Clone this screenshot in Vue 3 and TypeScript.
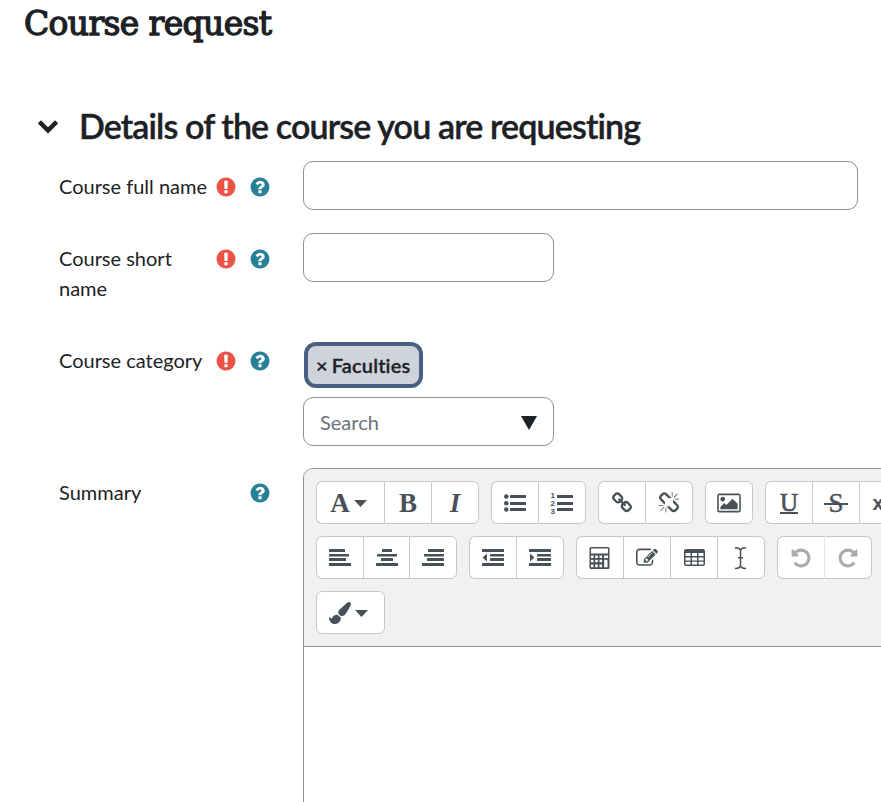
<script setup lang="ts">
interface Tool { icon: string; w: number; caret?: boolean; off?: boolean }

const ink: Record<string, string> = {
  link: 'M1520 1216q0-40-28-68l-208-208q-28-28-68-28-42 0-72 32 3 3 19 18.5t21.5 21.5 15 19 13 25.5 3.5 27.5q0 40-28 68t-68 28q-15 0-27.5-3.5t-25.5-13-19-15-21.5-21.5-18.5-19q-33 31-33 73 0 40 28 68l206 207q27 27 68 27 40 0 68-26l147-146q28-28 28-67zm-703-705q0-40-28-68l-206-207q-28-28-68-28-39 0-68 27l-147 146q-28 28-28 67 0 40 28 68l208 208q27 27 68 27 42 0 72-31-3-3-19-18.5t-21.5-21.5-15-19-13-25.5-3.5-27.5q0-40 28-68t68-28q15 0 27.5 3.5t25.5 13 19 15 21.5 21.5 18.5 19q33-31 33-73zm895 705q0 120-85 203l-147 146q-83 83-203 83-121 0-204-85l-206-207q-83-83-83-203 0-123 88-209l-88-88q-86 88-208 88-120 0-204-84l-208-208q-84-84-84-204t85-203l147-146q83-83 203-83 121 0 204 85l206 207q83 83 83 203 0 123-88 209l88 88q86-88 208-88 120 0 204 84l208 208q84 84 84 204z',
  unlink: 'M503 1271l-256 256q-10 9-23 9-12 0-23-9-9-10-9-23t9-23l256-256q10-9 23-9t23 9q9 10 9 23t-9 23zm169 41v320q0 14-9 23t-23 9-23-9-9-23v-320q0-14 9-23t23-9 23 9 9 23zm-224-224q0 14-9 23t-23 9h-320q-14 0-23-9t-9-23 9-23 23-9h320q14 0 23 9t9 23zm1264 128q0 120-85 203l-147 146q-83 83-203 83-121 0-204-85l-334-335q-21-21-42-56l239-18 273 274q28 28 68 27.5t68-27.5l147-146q28-28 28-67 0-40-28-68l-274-275 18-239q35 21 56 42l336 336q84 86 84 204zm-617-724l-239 18-273-274q-28-28-68-28-39 0-68 27l-147 146q-28 28-28 67 0 40 28 68l274 274-18 240q-35-21-56-42l-336-336q-84-86-84-204 0-120 85-203l147-146q83-83 203-83 121 0 204 85l334 335q21 21 42 56zm633 84q0 14-9 23t-23 9h-320q-14 0-23-9t-9-23 9-23 23-9h320q14 0 23 9t9 23zm-544-544v320q0 14-9 23t-23 9-23-9-9-23v-320q0-14 9-23t23-9 23 9 9 23zm407 151l-256 256q-11 9-23 9t-23-9q-9-10-9-23t9-23l256-256q10-9 23-9t23 9q9 10 9 23t-9 23z',
  image: 'M576 576q0 80-56 136t-136 56-136-56-56-136 56-136 136-56 136 56 56 136zm1024 384v448h-1408v-192l320-320 160 160 512-512zm96-704h-1600q-13 0-22.5 9.5t-9.5 22.5v1216q0 13 9.5 22.5t22.5 9.5h1600q13 0 22.5-9.5t9.5-22.5v-1216q0-13-9.5-22.5t-22.5-9.5zm160 32v1216q0 66-47 113t-113 47h-1600q-66 0-113-47t-47-113v-1216q0-66 47-113t113-47h1600q66 0 113 47t47 113z',
  edit: 'M888 1184l116-116-152-152-116 116v56h96v96h56zm440-720q-16-16-33 1l-350 350q-17 17-1 33t33-1l350-350q17-17 1-33zm80 594v190q0 119-84.5 203.5t-203.5 84.5h-832q-119 0-203.5-84.5t-84.5-203.5v-832q0-119 84.5-203.5t203.5-84.5h832q63 0 117 25 15 7 18 23 3 17-9 29l-49 49q-14 14-32 8-23-6-45-6h-832q-66 0-113 47t-47 113v832q0 66 47 113t113 47h832q66 0 113-47t47-113v-126q0-13 9-22l64-64q15-15 35-7t20 29zm-96-738l288 288-672 672h-288v-288zm444 132l-92 92-288-288 92-92q28-28 68-28t68 28l152 152q28 28 28 68t-28 68z',
  brush: 'M1615 0q70 0 122.5 46.5t52.5 116.5q0 63-45 151-332 629-465 752-97 91-218 91-126 0-216.5-92.5t-90.5-219.5q0-128 92-212l638-579q59-54 130-54zm-909 1034q39 76 106.5 130t150.5 76l1 71q4 213-129.5 347t-348.5 134q-123 0-218-46.5t-152.5-127.5-86.5-183-29-220q7 5 41 30t62 44.5 59 36.5 46 17q41 0 55-37 25-66 57.5-112.5t69.5-76 88-47.5 103-25.5 125-10.5z',
  undo: 'M1664 896q0 156-61 298t-164 245-245 164-298 61q-172 0-327-72.5t-264-204.5q-7-10-6.5-22.5t8.5-20.5l137-138q10-9 25-9 16 2 23 12 73 95 179 147t225 52q104 0 198.5-40.5t163.5-109.5 109.5-163.5 40.5-198.5-40.5-198.5-109.5-163.5-163.5-109.5-198.5-40.5q-98 0-188 35.5t-160 101.5l137 138q31 30 14 69-17 40-59 40h-448q-26 0-45-19t-19-45v-448q0-42 40-59 39-17 69 14l130 129q107-101 244.5-156.5t284.5-55.5q156 0 298 61t245 164 164 245 61 298z',
}
ink.redo = ink.undo

/* Line-based icons on a 22px grid: [x, y, width, height] */
const bars: Record<string, number[][]> = {
  left: [[0, 2, 16, 3], [0, 7, 20, 2.5], [0, 11, 17, 3], [0, 16, 22, 3]],
  center: [[6, 2, 10, 3], [1, 7, 20, 2.5], [5, 11, 12, 3], [0, 16, 22, 3]],
  right: [[6, 2, 16, 3], [2, 7, 20, 2.5], [5, 11, 17, 3], [0, 16, 22, 3]],
  outdent: [[0, 2, 22, 3], [8, 7, 14, 2.5], [8, 11, 14, 3], [0, 16, 22, 3]],
  indent: [[0, 2, 22, 3], [8, 7, 14, 2.5], [8, 11, 14, 3], [0, 16, 22, 3]],
  ul: [[6, 3, 16, 3], [6, 10, 16, 3], [6, 16, 16, 3]],
  ol: [[6, 3, 16, 3], [6, 10, 16, 3], [6, 16, 16, 3]],
}

const letters: Record<string, string> = { A: 'A', B: 'B', I: 'I', U: 'U', S: 'S', x: 'x' }

const rows: Tool[][][] = [
  [
    [{ icon: 'A', w: 68, caret: true }, { icon: 'B', w: 47 }, { icon: 'I', w: 48 }],
    [{ icon: 'ul', w: 47 }, { icon: 'ol', w: 48 }],
    [{ icon: 'link', w: 47 }, { icon: 'unlink', w: 48 }],
    [{ icon: 'image', w: 48 }],
    [{ icon: 'U', w: 47 }, { icon: 'S', w: 47 }, { icon: 'x', w: 48 }],
  ],
  [
    [{ icon: 'left', w: 47 }, { icon: 'center', w: 46 }, { icon: 'right', w: 48 }],
    [{ icon: 'outdent', w: 47 }, { icon: 'indent', w: 48 }],
    [{ icon: 'calc', w: 47 }, { icon: 'edit', w: 47 }, { icon: 'table', w: 47 }, { icon: 'cursor', w: 48 }],
    [{ icon: 'undo', w: 47, off: true }, { icon: 'redo', w: 48, off: true }],
  ],
  [[{ icon: 'brush', w: 69, caret: true }]],
]

const fields = [
  { id: 'full', label: 'Course full name', required: true },
  { id: 'short', label: 'Course short name', required: true },
  { id: 'category', label: 'Course category', required: true },
  { id: 'summary', label: 'Summary', required: false },
]
</script>

<template>
  <main class="page">
    <h1>Course request</h1>
    <header class="section">
      <svg class="chevron" viewBox="0 0 1792 1792"><path d="M1683 808l-742 741q-19 19-45 19t-45-19l-742-741q-19-19-19-45.5t19-45.5l166-165q19-19 45-19t45 19l531 531 531-531q19-19 45-19t45 19l166 165q19 19 19 45.5t-19 45.5z" /></svg>
      <h3>Details of the course you are requesting</h3>
    </header>

    <div v-for="f in fields" :key="f.id" class="row" :class="f.id">
      <div class="label">
        <label>{{ f.label }}</label>
        <span class="marks">
          <svg v-if="f.required" class="req" viewBox="0 0 1792 1792"><path d="M896 128q209 0 385.5 103t279.5 279.5 103 385.5-103 385.5-279.5 279.5-385.5 103-385.5-103-279.5-279.5-103-385.5 103-385.5 279.5-279.5 385.5-103zm128 1247v-190q0-14-9-23.5t-22-9.5h-192q-13 0-23 10t-10 23v190q0 13 10 23t23 10h192q13 0 22-9.5t9-23.5zm-2-344l18-621q0-12-10-18-10-8-24-8h-220q-14 0-24 8-10 6-10 18l17 621q0 10 10 17.5t24 7.5h185q14 0 23.5-7.5t10.5-17.5z" /></svg>
          <svg class="help" viewBox="0 0 1792 1792"><path d="M1024 1376v-192q0-14-9-23t-23-9h-192q-14 0-23 9t-9 23v192q0 14 9 23t23 9h192q14 0 23-9t9-23zm256-672q0-88-55.5-163t-138.5-116-170-41q-243 0-371 213-15 24 8 42l132 100q7 6 19 6 16 0 25-12 53-68 86-92 34-24 86-24 48 0 85.5 26t37.5 59q0 38-20 61t-68 45q-63 28-115.5 86.5t-52.5 125.5v36q0 14 9 23t23 9h192q14 0 23-9t9-23q0-19 21.5-49.5t54.5-49.5q32-18 49-28.5t46-35 44.5-48 28-60.5 12.5-81zm384 192q0 209-103 385.5t-279.5 279.5-385.5 103-385.5-103-279.5-279.5-103-385.5 103-385.5 279.5-279.5 385.5-103 385.5 103 279.5 279.5 103 385.5z" /></svg>
        </span>
      </div>

      <input v-if="f.id === 'full'" class="box wide" type="text" />
      <input v-else-if="f.id === 'short'" class="box" type="text" />
      <div v-else-if="f.id === 'category'" class="picker">
        <span class="tag"><span class="times">×</span> Faculties</span>
        <div class="box search">
          <span>Search</span>
          <svg viewBox="0 0 16 14"><path d="M0 0h16L8 14z" /></svg>
        </div>
      </div>
      <div v-else class="editor">
        <div class="toolbar">
          <div v-for="(groups, r) in rows" :key="r" class="tools">
            <div v-for="(group, g) in groups" :key="g" class="group">
              <button v-for="t in group" :key="t.icon" type="button" :class="{ off: t.off, menu: t.caret }" :style="{ width: t.w + 'px' }">
                <span v-if="letters[t.icon]" class="letter" :class="'l-' + t.icon">{{ letters[t.icon] }}</span>
                <svg v-else-if="ink[t.icon]" class="icon" :class="t.icon" viewBox="0 0 1792 1792"><path :d="ink[t.icon]" /></svg>
                <svg v-else class="icon" :class="t.icon" viewBox="0 0 22 22">
                  <rect v-for="(b, i) in bars[t.icon] || []" :key="i" :x="b[0]" :y="b[1]" :width="b[2]" :height="b[3]" rx=".5" />
                  <path v-if="t.icon === 'outdent'" d="M5 6.5v8L.6 10.5z" />
                  <path v-if="t.icon === 'indent'" d="M1 6.500v8l4.400-4z" />
                  <g v-if="t.icon === 'ul'"><circle cx="2.3" cy="4.5" r="2.3" /><circle cx="2.3" cy="11.3" r="2.3" /><circle cx="2.3" cy="17.5" r="2.3" /></g>
                  <g v-if="t.icon === 'ol'" class="digits"><text x="-.5" y="5.800">1</text><text x="-.5" y="13.900">2</text><text x="-.5" y="22">3</text></g>
                  <path v-if="t.icon === 'calc'" fill-rule="evenodd" d="M2 0h17q1.500 0 1.500 1.500v19q0 1.500-1.500 1.500h-17q-1.500 0-1.500-1.500v-19q0-1.500 1.500-1.500zM2 1.500v5h17v-5zM2 8.500v2.500h2.500v-2.500zM6.200 8.500v2.500h2.600v-2.500zM10.500 8.500v2.500h2.600v-2.500zM15 8.500v2.500h4v-2.500zM2 12.700v2.600h2.500v-2.600zM6.200 12.700v2.600h2.600v-2.600zM10.500 12.700v2.600h2.600v-2.600zM15.200 12.700v7.500h3.300v-7.500zM2 17.500v2.800h2.500v-2.800zM6.200 17.500v2.800h2.600v-2.800zM10.500 17.500v2.800h2.600v-2.800z" />
                  <path v-if="t.icon === 'table'" fill-rule="evenodd" d="M2 2h17q2 0 2 2v13q0 2-2 2h-17q-2 0-2-2v-13q0-2 2-2zM1.500 6v3h5v-3zM8 6v3h5v-3zM14.500 6v3h5v-3zM1.500 10.400v3h5v-3zM8 10.400v3h5v-3zM14.500 10.400v3h5v-3zM1.500 14.800v2.700h5v-2.700zM8 14.800v2.700h5v-2.700zM14.500 14.800v2.700h5v-2.700z" />
                  <path v-if="t.icon === 'cursor'" class="stroke" d="M5 .8q5.500 0 5.500 3.500q0-3.500 5.500-3.500M5 21.500q5.500 0 5.500-3.500q0 3.500 5.500 3.500M10.500 4v14M8 10.800h5" />
                </svg>
                <svg v-if="t.caret" class="caret" viewBox="0 0 13 7"><path d="M0 0h13L6.500 7z" /></svg>
              </button>
            </div>
          </div>
        </div>
        <div class="content"></div>
      </div>
    </div>
  </main>
</template>

<style>
body { margin: 0; background: #fff; overflow: hidden; }
</style>

<style scoped>
* { box-sizing: border-box; }
.page { width: 881px; height: 802px; overflow: hidden; color: #1d2125; font: 400 20px/30px Lato, sans-serif; }
svg { display: block; flex: none; overflow: visible; fill: currentColor; }
h1 { margin: 0; padding-left: 24px; height: 46px; font: 400 33px/48px "DejaVu Serif", serif; letter-spacing: -.65px; -webkit-text-stroke: 1.3px currentColor; white-space: nowrap; }
.section { display: flex; align-items: center; gap: 20px; height: 42px; margin: 60px 0 13px; padding-left: 37px; }
.chevron { width: 22px; height: 22px; margin-top: -5px; }
h3 { margin: -2px 0 0; font: 600 34px/42px Lato, sans-serif; letter-spacing: -.87px; -webkit-text-stroke: .4px currentColor; white-space: nowrap; }
.row { display: flex; align-items: flex-start; padding-left: 59px; }
.full { height: 72px; }
.short { height: 102px; }
.category { height: 133px; }
.label { display: flex; justify-content: space-between; flex: none; width: 244px; padding: 11px 32px 0 0; }
.summary .label { padding-top: 10px; }
.label label { max-width: 150px; margin-top: -1px; }
.marks { display: flex; gap: 12px; height: 30px; align-items: center; }
.marks svg { width: 22px; height: 22px; }
.req { color: #ea5345; }
.help { color: #268197; }
.box { flex: none; width: 251px; height: 49px; margin: 0; border: 1px solid #8d8f9c; border-radius: 10px; background: #fff; }
.wide { width: 555px; }
.picker { padding-top: 7px; }
.tag { display: flex; align-items: center; width: 119px; height: 46px; margin: 0 0 9px 1px; padding-left: 8px; gap: 4px; border: 4px solid #486083; border-radius: 12px; background: #ced4da; font-weight: 600; letter-spacing: .15px; -webkit-text-stroke: .3px currentColor; white-space: nowrap; }
.search { display: flex; align-items: center; justify-content: space-between; padding: 0 16px; color: #6a737b; }
.search svg { width: 16px; height: 14px; color: #1d2125; margin-top: 2px; }
.editor { flex: none; width: 700px; border: 1px solid #8d8f9c; border-radius: 10px 0 0 0; overflow: hidden; }
.toolbar { display: flex; flex-direction: column; gap: 12px; padding: 12px; background: #f1f1f1; border-bottom: 1px solid #8d8f9c; }
.content { height: 300px; }
.tools, .group { display: flex; }
.tools { gap: 12px; }
button { display: flex; align-items: center; justify-content: center; gap: 4px; height: 43px; margin: 0; padding: 0; border: 1px solid #c5c8ca; border-right-width: 0; background: #fff; color: #495057; }
button:first-child { border-radius: 6px 0 0 6px; }
button:last-child { border-right-width: 1px; border-radius: 0 6px 6px 0; }
button:only-child { border-radius: 6px; }
.menu { padding-right: 4px; }
.off { color: #a9acaf; }
.off + .off { border-left-color: #e4e5e6; }
.icon { width: 22px; height: 22px; }
.table { margin-left: 1px; }
.redo { transform: scaleX(-1); }
.caret { width: 13px; height: 7px; margin-top: 1px; }
.stroke { fill: none; stroke: currentColor; stroke-width: 1.5; }
.digits text { font: 700 8px/8px "Liberation Sans", sans-serif; }
.letter { font: 700 27px/30px "Liberation Serif", serif; }
.l-I { font-style: italic; }
.l-U, .l-S { position: relative; font-weight: 400; }
.l-U { font-weight: 400; font-size: 25px; line-height: 32px; -webkit-text-stroke: .6px currentColor; }
.l-S { -webkit-text-stroke: .4px currentColor; }
.l-U::after, .l-S::after { content: ""; position: absolute; left: 0; right: 0; bottom: 5px; height: 1.5px; background: currentColor; }
.l-S::after { left: -4px; right: -4px; bottom: 13px; }
.l-x { font: 700 20px/30px "Liberation Sans", sans-serif; margin-right: 10px; }
</style>
